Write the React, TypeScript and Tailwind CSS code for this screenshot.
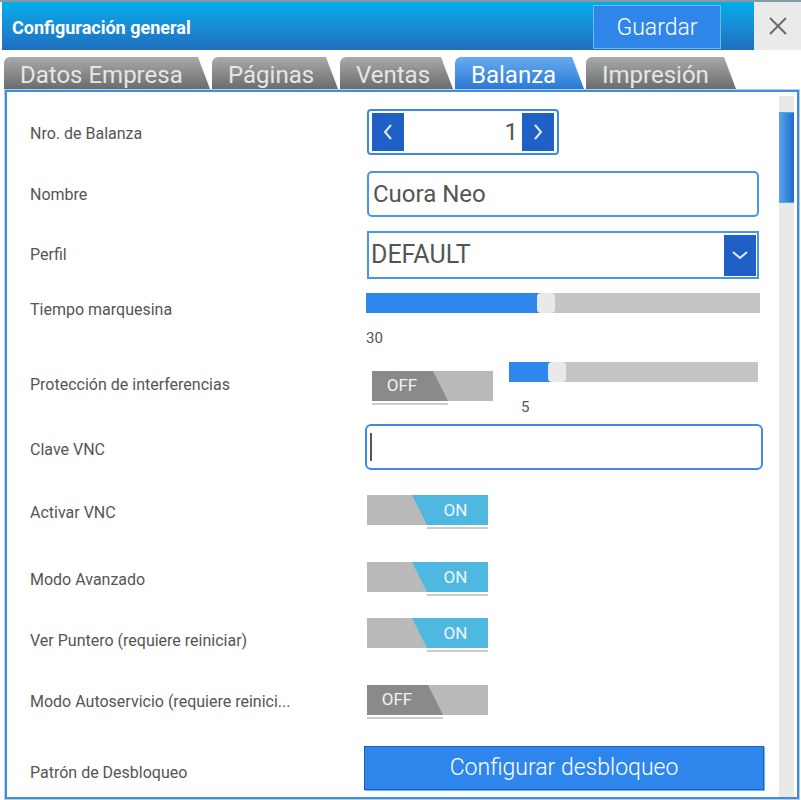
import React from 'react';

const TABS = [
  { label: 'Datos Empresa', width: 'w-[206px]', active: false },
  { label: 'Páginas', width: 'w-[126px]', active: false },
  { label: 'Ventas', width: 'w-[113px]', active: false },
  { label: 'Balanza', width: 'w-[129px]', active: true },
  { label: 'Impresión', width: 'w-[150px]', active: false },
];

function Chevron({ dir }: { dir: 'left' | 'right' | 'down' }) {
  if (dir === 'down') {
    return (
      <svg width="18" height="12" viewBox="0 0 18 12" fill="none">
        <polyline points="2,3 9,9 16,3" stroke="#e6ecf7" strokeWidth="2" />
      </svg>
    );
  }
  const pts = dir === 'left' ? '10,2 4,9 10,16' : '4,2 10,9 4,16';
  return (
    <svg width="14" height="18" viewBox="0 0 14 18" fill="none">
      <polyline points={pts} stroke="#e6ecf7" strokeWidth="2" />
    </svg>
  );
}

function Toggle({ on }: { on: boolean }) {
  return (
    <div className="w-[121px]">
      <div className={`relative h-[30px] w-[121px] ${on ? 'bg-[#4fb8e0]' : 'bg-[#b9b9b9]'}`}>
        {on ? (
          <>
            <div className="absolute inset-0 bg-[#b9b9b9] [clip-path:polygon(0_0,45px_0,60px_100%,0_100%)]" />
            <span className="absolute left-[60px] right-0 top-0 flex h-full items-center justify-center pr-[4px] pt-[1px] text-[17px] text-[#f2f6f8]">
              ON
            </span>
          </>
        ) : (
          <>
            <div className="absolute inset-0 bg-[#8a8a8a] [clip-path:polygon(0_0,61px_0,76px_100%,0_100%)]" />
            <span className="absolute left-0 top-0 flex h-full w-[60px] items-center justify-center text-[17px] text-[#f2f2f2]">
              OFF
            </span>
          </>
        )}
      </div>
      <div className={`mt-[2px] h-[2px] bg-[#cccccc] ${on ? 'ml-[60px] w-[61px]' : 'w-[76px]'}`} />
    </div>
  );
}

function Slider({ width, fill }: { width: string; fill: number }) {
  return (
    <div className={`relative h-[20px] bg-[#c4c5c4] ${width}`}>
      <div className="absolute left-0 top-0 h-full bg-[#2e88ec]" style={{ width: fill + 4 }} />
      <div
        className="absolute top-0 h-[20px] w-[18px] rounded-[4px] bg-[#e8e9e9]"
        style={{ left: fill }}
      />
    </div>
  );
}

function Label({ children, className = '' }: { children: React.ReactNode; className?: string }) {
  return (
    <div className={`w-[359px] shrink-0 pl-[23px] text-[16px] leading-[20px] text-[#555555] ${className}`}>
      {children}
    </div>
  );
}

export default function App() {
  return (
    <div
      className="flex h-[800px] w-[801px] flex-col overflow-hidden bg-white"
      style={{ fontFamily: 'Roboto, "Noto Sans", sans-serif' }}
    >
      {/* Header */}
      <div className="flex h-[50px] shrink-0 border-t-2 border-[#8a98a5]">
        <div className="ml-[2px] flex flex-1 items-start bg-gradient-to-b from-[#00aeec] to-[#1e6dbf]">
          <span className="ml-[10px] mt-[15px] text-[18px] leading-[22px] font-bold text-white">Configuración general</span>
          <button className="ml-auto mr-[33px] mt-[3px] flex h-[44px] w-[128px] items-center justify-center border border-[#63bff2] bg-[#2f86e8] pt-[3px] text-[23px] font-light text-white">
            Guardar
          </button>
        </div>
        <button className="flex w-[47px] items-center justify-center bg-[#e9eaea]">
          <svg width="20" height="20" viewBox="0 0 20 20" fill="none">
            <path d="M2 2L18 18M18 2L2 18" stroke="#6b6b6b" strokeWidth="2" />
          </svg>
        </button>
      </div>

      {/* Tabs */}
      <div className="mt-[7px] flex h-[32px] shrink-0 gap-[2px] pl-[4px]">
        {TABS.map((t) => (
          <div
            key={t.label}
            className={`flex h-full items-center rounded-tl-[6px] pl-[16px] pr-[12px] pt-[4px] text-[24px] leading-none [clip-path:polygon(0_0,calc(100%-12px)_0,100%_100%,0_100%)] ${t.width} ${
              t.active
                ? 'bg-gradient-to-b from-[#66acf0] to-[#2b78d6] text-white'
                : 'bg-gradient-to-b from-[#a9aaaa] to-[#6b6d6d] text-[#e6e6e6]'
            }`}
          >
            {t.label}
          </div>
        ))}
      </div>

      {/* Panel */}
      <div className="ml-[4px] mr-[1px] flex min-h-0 flex-1 border border-[#bccbe0]">
        <div className="flex flex-1 border-2 border-[#3d8de8]">
          <div className="flex-1 pt-[16px]">
            {/* Nro. de Balanza */}
            <div className="flex h-[48px] items-center">
              <Label className="mt-[3px]">Nro. de Balanza</Label>
              <div className="ml-[1px] flex h-[46px] w-[192px] items-center rounded-[4px] border-2 border-[#3b8ae6] px-[3px] py-[2px]">
                <button className="flex h-[38px] w-[32px] items-center justify-center bg-[#1f5fc6]">
                  <Chevron dir="left" />
                </button>
                <span className="flex-1 pr-[4px] text-right text-[24px] text-[#555555]">1</span>
                <button className="flex h-[38px] w-[32px] items-center justify-center bg-[#1f5fc6]">
                  <Chevron dir="right" />
                </button>
              </div>
            </div>

            {/* Nombre */}
            <div className="mt-[14px] flex h-[48px] items-center">
              <Label className="mt-[1px]">Nombre</Label>
              <div className="ml-[1px] flex h-[46px] w-[392px] items-center rounded-[5px] border-2 border-[#4a94ec] pl-[4px] text-[24px] text-[#555555]">
                Cuora Neo
              </div>
            </div>

            {/* Perfil */}
            <div className="mt-[12px] flex h-[50px] items-center">
              <Label>Perfil</Label>
              <div className="ml-[1px] flex h-[48px] w-[392px] items-center border-2 border-[#4a94ec] pl-[2px] pr-[1px] text-[25px] text-[#555555]">
                <span className="flex-1">DEFAULT</span>
                <span className="flex h-[41px] w-[32px] items-center justify-center bg-[#1f5fc6]">
                  <Chevron dir="down" />
                </span>
              </div>
            </div>

            {/* Tiempo marquesina */}
            <div className="mt-[8px] flex h-[60px] items-start">
              <Label className="mt-[12px]">Tiempo marquesina</Label>
              <div className="mt-[5px]">
                <Slider width="w-[394px]" fill={171} />
                <div className="mt-[15px] text-[15px] leading-[20px] text-[#555555]">30</div>
              </div>
            </div>

            {/* Protección de interferencias */}
            <div className="mt-[12px] flex h-[58px] items-start">
              <Label className="mt-[15px]">Protección de interferencias</Label>
              <div className="ml-[6px] mt-[11px]">
                <Toggle on={false} />
              </div>
              <div className="ml-[16px] mt-[2px]">
                <Slider width="w-[249px]" fill={39} />
                <div className="ml-[12px] mt-[15px] text-[15px] leading-[20px] text-[#555555]">5</div>
              </div>
            </div>

            {/* Clave VNC */}
            <div className="mt-[6px] flex h-[46px] items-center">
              <Label className="mt-[6px]">Clave VNC</Label>
              <div className="ml-[-1px] flex h-[46px] w-[398px] items-center rounded-[6px] border-2 border-[#3d8ae8] pl-[3px]">
                <div className="h-[28px] w-[2px] bg-[#555555]" />
              </div>
            </div>

            {/* Activar VNC */}
            <div className="mt-[25px] flex h-[34px] items-start">
              <Label className="mt-[8px]">Activar VNC</Label>
              <div className="ml-[1px]">
                <Toggle on />
              </div>
            </div>

            {/* Modo Avanzado */}
            <div className="mt-[33px] flex h-[34px] items-start">
              <Label className="mt-[8px]">Modo Avanzado</Label>
              <div className="ml-[1px]">
                <Toggle on />
              </div>
            </div>

            {/* Ver Puntero */}
            <div className="mt-[22px] flex h-[34px] items-start">
              <Label className="mt-[13px]">Ver Puntero (requiere reiniciar)</Label>
              <div className="ml-[1px]">
                <Toggle on />
              </div>
            </div>

            {/* Modo Autoservicio */}
            <div className="mt-[33px] flex h-[34px] items-start">
              <Label className="mt-[7px]">Modo Autoservicio (requiere reinici...</Label>
              <div className="ml-[1px]">
                <Toggle on={false} />
              </div>
            </div>

            {/* Patrón de Desbloqueo */}
            <div className="mt-[27px] flex h-[44px] items-start">
              <Label className="mt-[17px]">Patrón de Desbloqueo</Label>
              <button className="ml-[-2px] flex h-[44px] w-[400px] items-center justify-center border border-[#1f5fae] bg-[#2e86ec] text-[23px] font-light text-white shadow-[1px_1px_0_#5cc0f0]">
                Configurar desbloqueo
              </button>
            </div>
          </div>

          {/* Scrollbar */}
          <div className="mr-[3px] mt-[4px] w-[15px] bg-[#e8e9e9]">
            <div className="mt-[16px] h-[91px] border-y border-[#38b2e8] bg-gradient-to-r from-[#5aa5ec] to-[#1f6ccd]" />
          </div>
        </div>
      </div>
    </div>
  );
}
